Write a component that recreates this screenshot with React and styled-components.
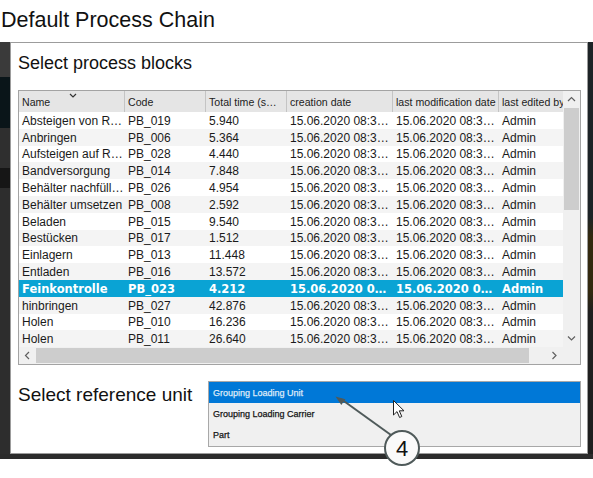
import React from 'react';
import styled, { createGlobalStyle } from 'styled-components';

const GlobalStyle = createGlobalStyle`
  html, body {
    margin: 0;
    padding: 0;
    background: #fff;
  }
  body {
    width: 593px;
    height: 478px;
    overflow: hidden;
    font-family: "Liberation Sans", Arial, sans-serif;
  }
`;

// Page frame
const Page = styled.div`
  position: relative;
  width: 593px;
  height: 478px;
  display: flex;
  flex-direction: column;
`;

const Title = styled.div`
  height: 42px;
  box-sizing: border-box;
  padding: 8px 0 0 1px;
  font-size: 21.5px;
  line-height: 24px;
  color: #111;
`;

const Middle = styled.div`
  display: flex;
  height: 412px;
`;

const LeftStrip = styled.div`
  width: 10px;
  overflow: hidden;
  background: linear-gradient(
    to bottom,
    #3a3a3a 0 35px,
    #0a1519 35px 86px,
    #2f2f2f 86px 126px,
    #161616 126px 146px,
    #2d2d2d 146px
  );
`;

const RightStrip = styled.div`
  width: 5px;
  background: linear-gradient(
    to bottom,
    #1d2326 0 175px,
    #33290f 195px 250px,
    #1f1f1f 270px
  );
`;

const Band = styled.div`
  height: 5px;
  background: #2b2b2b;
`;

// Dialog
const Dialog = styled.div`
  flex: 1;
  box-sizing: border-box;
  border: 1px solid #9c9c9c;
  background: #fff;
  display: flex;
  flex-direction: column;
`;

const SectionTitle = styled.div`
  margin: ${(p) => p.$top || 0}px 0 0 7px;
  font-size: ${(p) => p.$size}px;
  line-height: ${(p) => p.$size + 2}px;
  color: #111;
  white-space: nowrap;
`;

const TableFrame = styled.div`
  margin: 17px 6px 0 7px;
  border: 1px solid #a3a3a3;
  display: grid;
  grid-template-columns: 544px 17px;
  grid-template-rows: 256px 17px;
`;

const Body = styled.div`
  overflow: hidden;
`;

const cols = '106px 81px 81px 106px 106px 64px';

const HeaderRow = styled.div`
  display: grid;
  grid-template-columns: ${cols};
  height: 21px;
  background: #e5e5e5;
  font-size: 10.6px;
  color: #222;
`;

const HeaderCell = styled.div`
  position: relative;
  display: flex;
  align-items: center;
  padding-left: 3px;
  border-right: 1px solid #c4c4c4;
  white-space: nowrap;
  overflow: hidden;
  &:last-child {
    border-right: none;
  }
`;

const SortMark = styled.svg`
  position: absolute;
  left: 50px;
  top: 2px;
`;

const Row = styled.div`
  display: grid;
  grid-template-columns: ${cols};
  height: 16.8px;
  align-items: center;
  background: ${(p) => (p.$selected ? '#0aa3d4' : p.$alt ? '#f4f4f4' : '#fff')};
  color: ${(p) => (p.$selected ? '#fff' : '#1a1a1a')};
  font-family: ${(p) => (p.$selected ? '"DejaVu Sans", Verdana, sans-serif' : '"Liberation Sans", Arial, sans-serif')};
  font-weight: ${(p) => (p.$selected ? 'bold' : 'normal')};
  font-size: ${(p) => (p.$selected ? '11.5px' : '12px')};
`;

const Cell = styled.div`
  padding: 1px 0 0 3px;
  white-space: nowrap;
  overflow: hidden;
`;

// Scrollbars
const VScroll = styled.div`
  display: flex;
  flex-direction: column;
  background: #f0f0f0;
`;

const HScroll = styled.div`
  display: flex;
  background: #f0f0f0;
`;

const ArrowBox = styled.div`
  width: 17px;
  height: 17px;
  flex: none;
  display: flex;
  align-items: center;
  justify-content: center;
`;

const VThumb = styled.div`
  height: 102px;
  background: #cdcdcd;
  margin: 0 1px;
`;

const HThumb = styled.div`
  width: 493px;
  background: #cdcdcd;
  margin: 1px 0;
`;

const Filler = styled.div`
  flex: 1;
`;

const Corner = styled.div`
  background: #f0f0f0;
`;

// Reference unit
const RefRow = styled.div`
  display: flex;
  align-items: flex-start;
  margin: 16px 6px 0 0;
`;

const Dropdown = styled.div`
  margin-left: auto;
  width: 373px;
  height: 66px;
  box-sizing: border-box;
  border: 1px solid #a8a8a8;
  background: #f0f0f0;
  display: flex;
  flex-direction: column;
`;

const Option = styled.div`
  flex: 1;
  display: flex;
  align-items: center;
  padding-left: 4px;
  font-size: 9px;
  -webkit-text-stroke: 0.25px currentColor;
  background: ${(p) => (p.$active ? '#0078d7' : 'transparent')};
  color: ${(p) => (p.$active ? '#dfeaf7' : '#151515')};
`;

// Overlays
const Pointer = styled.svg`
  position: absolute;
  left: 393px;
  top: 400px;
`;

const CalloutLine = styled.svg`
  position: absolute;
  left: 330px;
  top: 390px;
`;

const Bubble = styled.div`
  position: absolute;
  left: 384px;
  top: 430px;
  width: 36px;
  height: 36px;
  box-sizing: border-box;
  border: 2px solid #4f5a5a;
  border-radius: 50%;
  background: #fafafa;
  display: flex;
  align-items: center;
  justify-content: center;
  font-size: 22px;
  color: #111;
  padding-top: 2px;
`;

const Chevron = ({ dir }) => {
  const d = {
    up: 'M1 5 L4.5 1.5 L8 5',
    down: 'M1 1.5 L4.5 5 L8 1.5',
    left: 'M5 1 L1.5 4.5 L5 8',
    right: 'M1.5 1 L5 4.5 L1.5 8',
  }[dir];
  const vertical = dir === 'up' || dir === 'down';
  return (
    <svg width={vertical ? 9 : 7} height={vertical ? 7 : 9}>
      <path d={d} fill="none" stroke="#606060" strokeWidth="1.2" />
    </svg>
  );
};

const blocks = [
  ['Absteigen von R…', 'PB_019', '5.940'],
  ['Anbringen', 'PB_006', '5.364'],
  ['Aufsteigen auf R…', 'PB_028', '4.440'],
  ['Bandversorgung', 'PB_014', '7.848'],
  ['Behälter nachfüll…', 'PB_026', '4.954'],
  ['Behälter umsetzen', 'PB_008', '2.592'],
  ['Beladen', 'PB_015', '9.540'],
  ['Bestücken', 'PB_017', '1.512'],
  ['Einlagern', 'PB_013', '11.448'],
  ['Entladen', 'PB_016', '13.572'],
  ['Feinkontrolle', 'PB_023', '4.212'],
  ['hinbringen', 'PB_027', '42.876'],
  ['Holen', 'PB_010', '16.236'],
  ['Holen', 'PB_011', '26.640'],
];

const headers = ['Name', 'Code', 'Total time (s…', 'creation date', 'last modification date', 'last edited by'];

const App = () => {
  const selected = 'PB_023';

  return (
    <Page>
      <GlobalStyle />
      <Title>Default Process Chain</Title>
      <Middle>
        <LeftStrip />
        <Dialog>
          <SectionTitle $top={10} $size={18}>Select process blocks</SectionTitle>
          <TableFrame>
            <Body>
              <HeaderRow>
                {headers.map((h, i) => (
                  <HeaderCell key={h}>
                    {h}
                    {i === 0 && (
                      <SortMark width="8" height="5">
                        <path d="M1 1 L4 4 L7 1" fill="none" stroke="#333" strokeWidth="1.2" />
                      </SortMark>
                    )}
                  </HeaderCell>
                ))}
              </HeaderRow>
              {blocks.map(([name, code, time], i) => {
                const isSel = code === selected;
                const date = isSel ? '15.06.2020 0…' : '15.06.2020 08:3…';
                return (
                  <Row key={code} $alt={i % 2 === 1} $selected={isSel}>
                    <Cell>{name}</Cell>
                    <Cell>{code}</Cell>
                    <Cell>{time}</Cell>
                    <Cell>{date}</Cell>
                    <Cell>{date}</Cell>
                    <Cell>Admin</Cell>
                  </Row>
                );
              })}
            </Body>
            <VScroll>
              <ArrowBox><Chevron dir="up" /></ArrowBox>
              <VThumb />
              <Filler />
              <ArrowBox><Chevron dir="down" /></ArrowBox>
            </VScroll>
            <HScroll>
              <ArrowBox><Chevron dir="left" /></ArrowBox>
              <HThumb />
              <Filler />
              <ArrowBox><Chevron dir="right" /></ArrowBox>
            </HScroll>
            <Corner />
          </TableFrame>
          <RefRow>
            <SectionTitle $top={3} $size={19}>Select reference unit</SectionTitle>
            <Dropdown>
              <Option $active>Grouping Loading Unit</Option>
              <Option>Grouping Loading Carrier</Option>
              <Option>Part</Option>
            </Dropdown>
          </RefRow>
        </Dialog>
        <RightStrip />
      </Middle>
      <Band />

      <Pointer width="13" height="19" viewBox="0 0 13 19">
        <path
          d="M0.5 0.5 L0.5 15 L4 11.6 L6.6 17.5 L8.8 16.5 L6.3 10.8 L11 10.8 Z"
          fill="#fff"
          stroke="#222"
          strokeWidth="1"
          strokeLinejoin="round"
        />
      </Pointer>
      <CalloutLine width="70" height="55">
        <line x1="11" y1="9" x2="61" y2="45" stroke="#4f5a5a" strokeWidth="2" />
        <polygon points="5.5,6.5 11.3,14.9 15.4,9.2" fill="#4f5a5a" />
      </CalloutLine>
      <Bubble>4</Bubble>
    </Page>
  );
};

export default App;
